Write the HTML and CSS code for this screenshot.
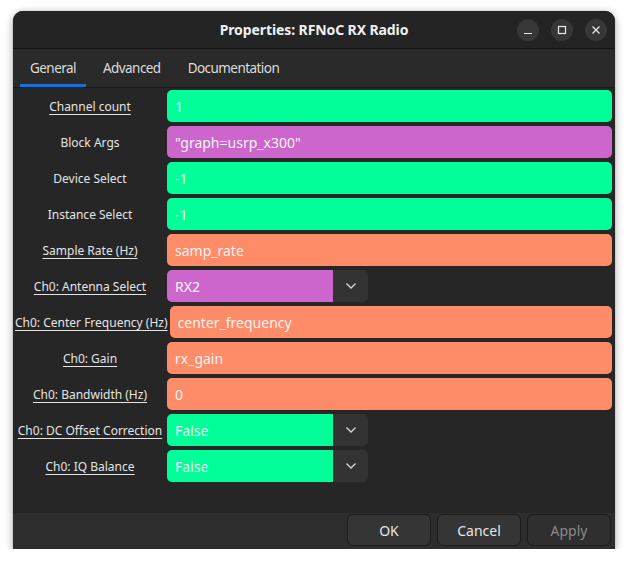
FILE: index.html
```html
<!DOCTYPE html>
<html>
<head>
<meta charset="utf-8">
<link rel="stylesheet" href="styles.css">
</head>
<body>
<div class="window">
  <div class="titlebar">
    <div class="title">Properties: RFNoC RX Radio</div>
    <div class="controls">
      <span class="ctl"><svg width="10" height="10" viewBox="0 0 10 10"><path d="M1 8.5H9" stroke="#e8e8e8" stroke-width="1.2"/></svg></span>
      <span class="ctl"><svg width="10" height="10" viewBox="0 0 10 10"><rect x="1.5" y="1.5" width="7" height="7" fill="none" stroke="#e8e8e8" stroke-width="1.2"/></svg></span>
      <span class="ctl"><svg width="10" height="10" viewBox="0 0 10 10"><path d="M1.5 1.5L8.5 8.5M8.5 1.5L1.5 8.5" stroke="#e8e8e8" stroke-width="1.3"/></svg></span>
    </div>
  </div>
  <div class="tabs">
    <div class="tab active">General</div>
    <div class="tab">Advanced</div>
    <div class="tab">Documentation</div>
  </div>
  <div class="content">
    <div class="row"><span class="label u">Channel count</span><div class="field green">1</div></div>
    <div class="row"><span class="label">Block Args</span><div class="field purple">"graph=usrp_x300"</div></div>
    <div class="row"><span class="label">Device Select</span><div class="field green">-1</div></div>
    <div class="row"><span class="label">Instance Select</span><div class="field green">-1</div></div>
    <div class="row"><span class="label u">Sample Rate (Hz)</span><div class="field salmon">samp_rate</div></div>
    <div class="row"><span class="label u">Ch0: Antenna Select</span><div class="combo"><div class="combo-value purple">RX2</div><div class="combo-btn"><svg width="12" height="8" viewBox="0 0 12 8"><path d="M1.5 1.5L6 6L10.5 1.5" fill="none" stroke="#d8d8d8" stroke-width="1.3"/></svg></div></div></div>
    <div class="row"><span class="label u">Ch0: Center Frequency (Hz)</span><div class="field salmon">center_frequency</div></div>
    <div class="row"><span class="label u">Ch0: Gain</span><div class="field salmon">rx_gain</div></div>
    <div class="row"><span class="label u">Ch0: Bandwidth (Hz)</span><div class="field salmon">0</div></div>
    <div class="row"><span class="label u">Ch0: DC Offset Correction</span><div class="combo"><div class="combo-value green">False</div><div class="combo-btn"><svg width="12" height="8" viewBox="0 0 12 8"><path d="M1.5 1.5L6 6L10.5 1.5" fill="none" stroke="#d8d8d8" stroke-width="1.3"/></svg></div></div></div>
    <div class="row"><span class="label u">Ch0: IQ Balance</span><div class="combo"><div class="combo-value green">False</div><div class="combo-btn"><svg width="12" height="8" viewBox="0 0 12 8"><path d="M1.5 1.5L6 6L10.5 1.5" fill="none" stroke="#d8d8d8" stroke-width="1.3"/></svg></div></div></div>
  </div>
  <div class="footer">
    <button class="btn">OK</button>
    <button class="btn">Cancel</button>
    <button class="btn disabled">Apply</button>
  </div>
</div>
</body>
</html>
```

FILE: styles.css
```css
html, body {
  margin: 0;
  padding: 0;
  background: #ffffff;
}
body {
  font-family: "Noto Sans", "Open Sans", sans-serif;
  color: #e6e6e6;
}
.window {
  position: relative;
  margin: 11px 0 0 13px;
  width: 602px;
  height: 538px;
  background: #262626;
  border-radius: 10px 10px 0 0;
  box-shadow: 0 2px 8px rgba(0,0,0,0.35), 0 0 1px rgba(0,0,0,0.5);
  display: flex;
  flex-direction: column;
  overflow: hidden;
}
.titlebar {
  height: 37px;
  flex-shrink: 0;
  background: #242424;
  border-bottom: 1px solid #161616;
  display: flex;
  align-items: center;
  justify-content: center;
  position: relative;
}
.title {
  font-size: 14px;
  font-weight: 700;
  color: #f0f0f0;
  letter-spacing: -0.1px;
}
.controls {
  position: absolute;
  right: 8px;
  top: 8px;
  display: flex;
  gap: 12px;
}
.ctl {
  width: 22px;
  height: 22px;
  border-radius: 50%;
  background: #373737;
  display: flex;
  align-items: center;
  justify-content: center;
}
.tabs {
  height: 38px;
  flex-shrink: 0;
  background: #2a2a2a;
  border-bottom: 1px solid #1a1a1a;
  display: flex;
  gap: 7px;
  padding-left: 7px;
}
.tab {
  font-size: 13.5px;
  letter-spacing: -0.55px;
  color: #dcdcdc;
  padding: 3px 10px 0;
  display: flex;
  align-items: center;
  border-bottom: 3px solid transparent;
  box-sizing: border-box;
}
.tab.active {
  border-bottom-color: #1a6fd8;
}
.content {
  flex: 1;
  padding: 2px 3px 0 0;
  display: flex;
  flex-direction: column;
  gap: 4px;
  background: #262626;
}
.row {
  display: flex;
  align-items: center;
  height: 32px;
}
.label {
  min-width: 154px;
  padding: 0 2px;
  box-sizing: border-box;
  text-align: center;
  font-size: 12px;
  color: #e4e4e4;
  white-space: nowrap;
  flex-shrink: 0;
}
.label.u {
  text-decoration: underline;
  text-underline-offset: 3px;
}
.field {
  flex: 1;
  height: 32px;
  border-radius: 5px;
  padding-left: 8px;
  display: flex;
  align-items: center;
  font-size: 14px;
  color: #f4f4f4;
}
.green { background: #00ff99; }
.purple { background: #cc66cc; }
.salmon { background: #ff8c69; }
.combo {
  width: 201px;
  height: 32px;
  display: flex;
  border-radius: 5px;
  overflow: hidden;
}
.combo-value {
  width: 166px;
  padding-left: 8px;
  box-sizing: border-box;
  display: flex;
  align-items: center;
  font-size: 14px;
  color: #f4f4f4;
}
.combo-btn {
  flex: 1;
  background: #333333;
  display: flex;
  align-items: center;
  justify-content: center;
  border-radius: 0 5px 5px 0;
}
.footer {
  height: 36px;
  flex-shrink: 0;
  background: #2d2d2d;
  display: flex;
  justify-content: flex-end;
  align-items: flex-start;
  gap: 6px;
  padding: 1px 4px 0 0;
  box-sizing: border-box;
}
.btn {
  width: 84px;
  height: 32px;
  background: #353535;
  border: 1px solid #1c1c1c;
  border-radius: 6px;
  font-family: "Noto Sans", "Open Sans", sans-serif;
  font-size: 14px;
  color: #e6e6e6;
}
.btn.disabled {
  color: #8a8a8a;
  background: #2f2f2f;
}
```
